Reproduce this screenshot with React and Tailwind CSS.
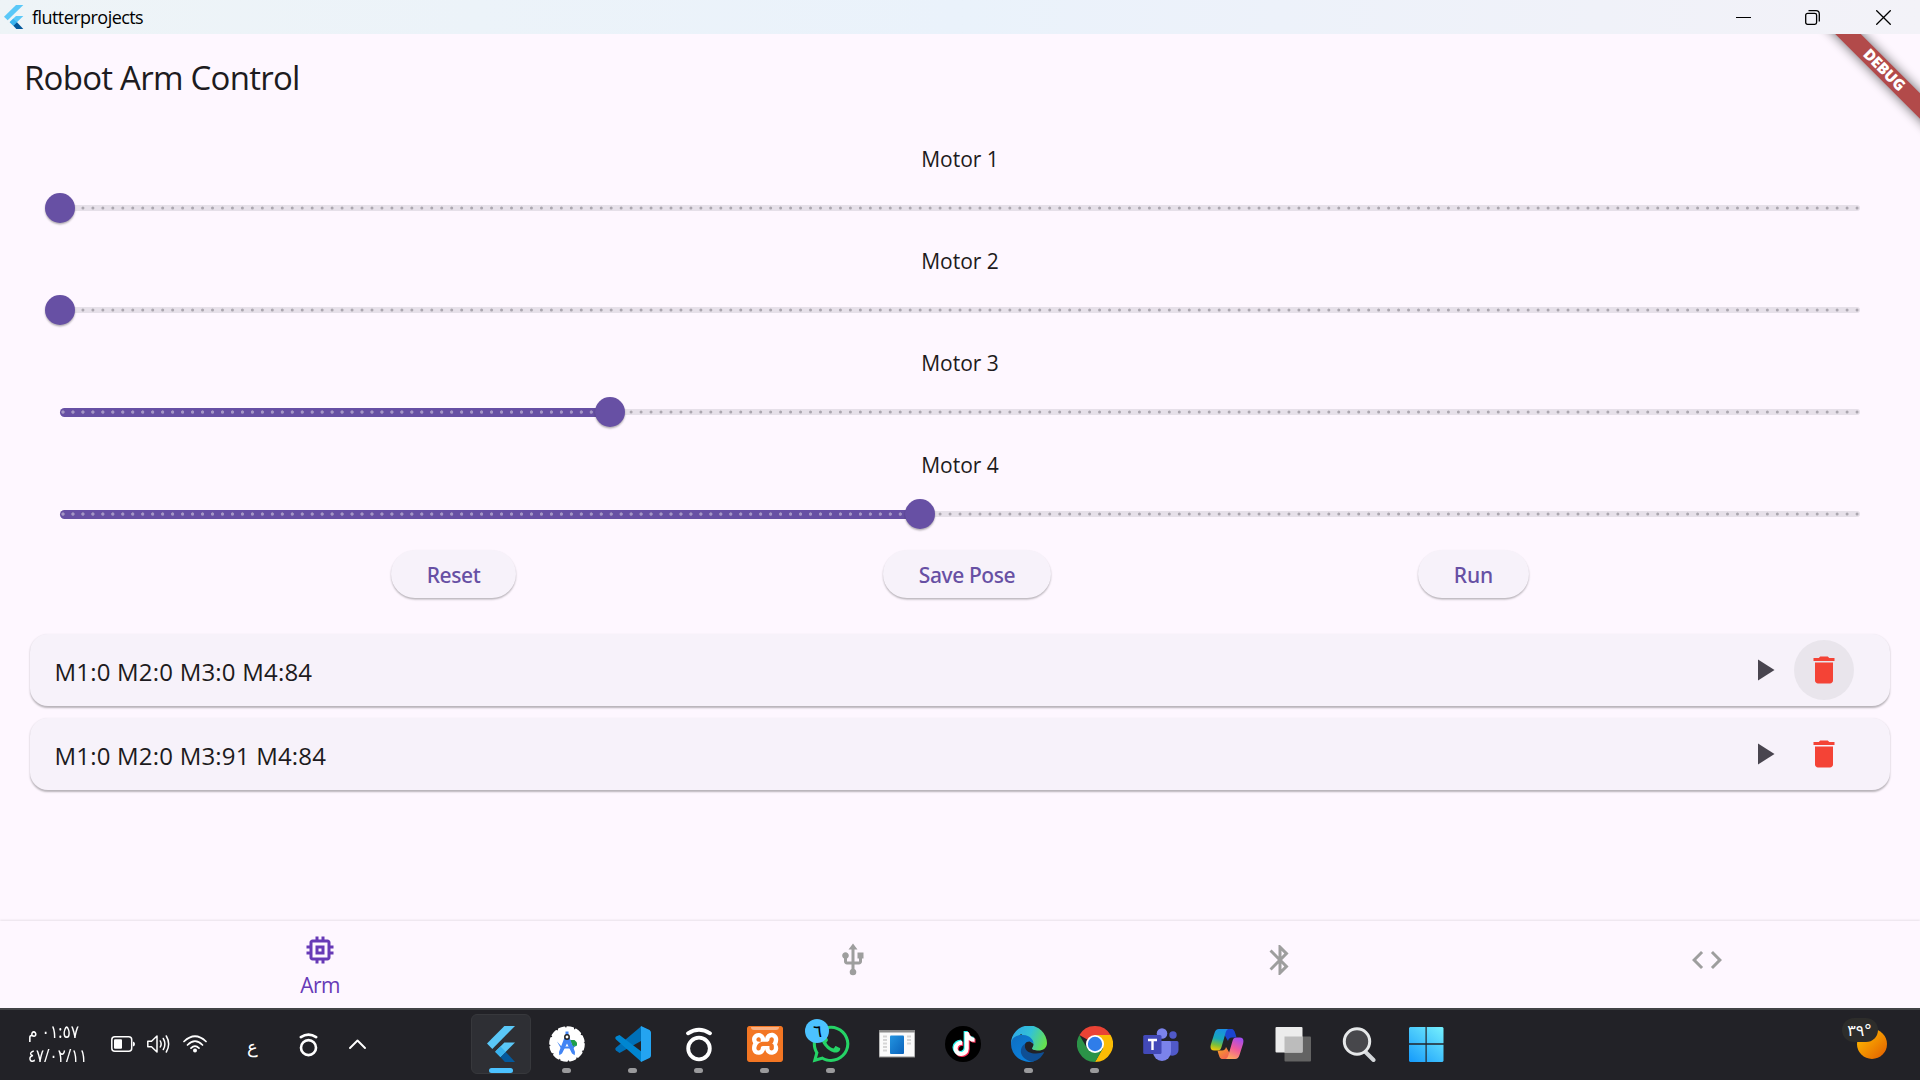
import React from "react";
import { MdMemory, MdUsb, MdBluetooth, MdCode, MdPlayArrow, MdDelete } from "react-icons/md";
import { FaWhatsapp, FaTiktok } from "react-icons/fa";
import { SiXampp } from "react-icons/si";

const motors = [
  { name: "Motor 1", value: 0 },
  { name: "Motor 2", value: 0 },
  { name: "Motor 3", value: 55 },
  { name: "Motor 4", value: 86 },
];

const poses = [
  { text: "M1:0 M2:0 M3:0 M4:84", hover: true },
  { text: "M1:0 M2:0 M3:91 M4:84", hover: false },
];

function FlutterLogo({ className }) {
  return (
    <svg viewBox="0 0 30 36" preserveAspectRatio="none" className={className}>
      <path d="M18 0H29L5.500 23L0 17.500Z" fill="#5ac8f8" />
      <path d="M18 16.500H29L14 31L8.500 25.500Z" fill="#5ac8f8" />
      <path d="M14 20.500L19.500 26L14 31.300L8.500 26Z" fill="#39b3ef" />
      <path d="M14 31.300L19.500 26L29 36H18.500Z" fill="#04599c" />
    </svg>
  );
}

function TitleBar() {
  return (
    <div className="flex h-[34px] items-center bg-linear-to-r from-[#eef4f7] via-[#eaf2fb] to-[#f3f2f8]">
      <FlutterLogo className="ml-1 h-6 w-5" />
      <span className="ml-2 text-[18px] leading-[34px] tracking-[-0.55px] text-black">flutterprojects</span>
      <div className="ml-auto flex items-center pr-[29px]">
        <svg className="mr-[54px] size-[15px]" viewBox="0 0 15 15">
          <path d="M0 7H15" stroke="#000" strokeWidth="1" transform="translate(0 .5)" />
        </svg>
        <svg className="mr-14 size-[15px]" viewBox="0 0 15 15" fill="none" stroke="#000" strokeWidth="1.300">
          <rect x="0.700" y="3.400" width="10.900" height="10.900" rx="1.800" />
          <path d="M3.500 0.700H11a3.300 3.300 0 0 1 3.300 3.300V11.500" />
        </svg>
        <svg className="size-[15px]" viewBox="0 0 15 15" fill="none" stroke="#000" strokeWidth="1.300">
          <path d="M0.300 0.300L14.700 14.700M14.700 0.300L0.300 14.700" />
        </svg>
      </div>
    </div>
  );
}

function DebugBanner() {
  return (
    <div className="pointer-events-none absolute top-0 right-0 size-[110px] overflow-hidden">
      <div className="absolute top-[27px] left-[-6px] h-[18px] w-[160px] rotate-45 bg-black/60 blur-[6px]" />
      <div className="absolute top-[27px] left-[-6px] flex h-[18px] w-[160px] rotate-45 items-center justify-center bg-[#b24a4a] text-[15.3px] leading-none font-black text-white">
        <span className="tracking-[-0.2px]">DEBUG</span>
      </div>
    </div>
  );
}

function Slider({ value }) {
  const left = `${(value / 180) * 100}%`;
  return (
    <div className="relative mx-[36px] flex h-[72px] items-center">
      <div className="h-[6px] w-full rounded-full bg-[#e6e0e9]" />
      {value > 0 && (
        <div className="absolute top-[31.500px] left-0 h-[9px] rounded-l-full bg-[#6750a4]" style={{ width: left }} />
      )}
      <svg className="absolute top-[34px] left-0 h-1 w-[1800px]" viewBox="0 0 1800 4" fill="none" strokeLinecap="round">
        <path d="M3 2H1797.100" stroke="#aba6af" strokeWidth="3" strokeDasharray="0 9.967" />
        {value > 0 && (
          <path d={`M3 2H${value * 10}`} stroke="#a495c9" strokeWidth="3" strokeDasharray="0 9.967" />
        )}
      </svg>
      <div
        className="absolute top-[21px] -ml-[15px] size-[30px] rounded-full bg-[#6750a4] shadow-[0_1.500px_2px_rgba(0,0,0,0.3)]"
        style={{ left }}
      />
    </div>
  );
}

function PillButton({ children, className }) {
  return (
    <button
      className={`h-12 rounded-full bg-[#f7f2fa] pt-[3px] font-['Noto_Sans',sans-serif] text-[21px] font-medium text-[#6750a4] shadow-[0_1.500px_2px_rgba(0,0,0,0.28)] ${className}`}
    >
      {children}
    </button>
  );
}

function PoseCard({ pose }) {
  return (
    <div className="flex h-[72px] items-center rounded-[18px] bg-[#f7f2fa] pr-9 pl-[24.500px] shadow-[0_1.500px_2px_rgba(0,0,0,0.28)]">
      <span className="pt-[3px] text-[24px] tracking-[0.2px] text-[#1d1b20]">{pose.text}</span>
      <div className="ml-auto flex">
        <div className="flex size-[60px] items-center justify-center">
          <MdPlayArrow className="size-9 text-[#49454f]" />
        </div>
        <div className={`flex size-[60px] items-center justify-center rounded-full ${pose.hover ? "bg-[#e9e5ec]" : ""}`}>
          <MdDelete className="size-9 text-[#f44336]" />
        </div>
      </div>
    </div>
  );
}

function BottomNav() {
  return (
    <div className="flex h-[87px] bg-[#fef7ff] shadow-[0_-1px_2px_rgba(0,0,0,0.09)]">
      <div className="flex w-[640px] flex-col items-center pt-[11px] text-[#673ab7]">
        <MdMemory className="size-9" />
        <span className="text-[21px] leading-[34px] tracking-[-0.6px]">Arm</span>
      </div>
      {[MdUsb, MdBluetooth, MdCode].map((Icon, i) => (
        <div key={i} className="flex flex-1 justify-center pt-[21px]">
          <Icon className="size-9 text-[#9e9e9e]" />
        </div>
      ))}
    </div>
  );
}

function AndroidStudioIcon() {
  return (
    <svg viewBox="0 0 36 36" className="size-9">
      <circle cx="18" cy="18" r="16.600" fill="#fff" />
      <circle cx="18" cy="18" r="16.600" fill="none" stroke="#fff" strokeWidth="2.400" strokeDasharray="5.500 3.190" strokeLinecap="round" />
      <path d="M21 14h4.500l2.500 2.500v3l-4 2z" fill="#1e9e4a" />
      <path d="M8 15.500l4.500 5h11.500l2.500-1.500-2 3.500H12z" fill="#4285f4" />
      <path d="M15.300 12L10 26l.3 3.200 2.700-1.700L18 17.500l5 10 2.700 1.700.3-3.200L20.700 12z" fill="#4285f4" />
      <path d="M16.500 5.500h3v5h-3z" fill="#4285f4" />
      <circle cx="18" cy="11" r="2.200" fill="#fff" stroke="#222" strokeWidth="1.500" />
    </svg>
  );
}

function VsCodeIcon() {
  return (
    <svg viewBox="0 0 36 36" className="size-9">
      <path d="M26 0.500L35 4.500V10L4.500 27L1 24.500Q-.4 23 1 21.500Z" fill="#0070b8" />
      <path d="M26 35.500L1 13.500Q-.4 12 1 10.500L4.500 9L27 26L35 31Z" fill="#0086d1" />
      <path d="M26 0Q25.500 .6 26 3V33Q25.500 35.400 26 36L34.500 32Q36 31 36 29.500V6.500Q36 5 34.500 4Z" fill="#24a4f1" />
    </svg>
  );
}

function ArcRingIcon({ className }) {
  return (
    <svg viewBox="0 0 36 36" className={className} fill="none" stroke="#fff" strokeLinecap="round">
      <circle cx="18" cy="22.500" r="10.800" strokeWidth="3.800" />
      <path d="M7 7.300Q18 .2 29 7.300" strokeWidth="3.800" />
    </svg>
  );
}

function XamppIcon() {
  return (
    <div className="relative size-9 rounded-[3px] bg-[#f37623]">
      <div className="absolute inset-[3px] bg-white" />
      <SiXampp className="absolute inset-0 size-9 text-[#f37623]" />
      <div className="absolute top-px left-1 h-[3px] w-7 rounded-b-full bg-[#f9b183]" />
    </div>
  );
}

function WhatsappIcon() {
  return (
    <div className="relative size-9">
      <FaWhatsapp className="absolute -top-[3px] -left-[3px] size-[42px] text-[#25d366]" />
      <div className="absolute -top-[7px] -left-2 flex size-6 items-center justify-center rounded-full bg-[#4cc2ff] text-[17px] leading-none text-black">
        ٦
      </div>
    </div>
  );
}

function AppWindowIcon() {
  return (
    <svg viewBox="0 0 36 36" className="size-9">
      <rect x="0" y="4" width="36" height="27.500" fill="#8b8b8b" />
      <rect x="0.600" y="6.500" width="34.800" height="24" fill="#fafafa" />
      <rect x="11" y="9.500" width="14" height="18.500" rx="1" fill="url(#appBlue)" />
      <path d="M4 10.500H8M4 14H8M4 17.500H8M4 21H8M4 24.500H8M28 10.500H32M28 14H32M28 17.500H32" stroke="#d5d5d5" strokeWidth="2" />
      <defs>
        <linearGradient id="appBlue" x1="0" y1="0" x2="1" y2="1">
          <stop stopColor="#2394e0" />
          <stop offset="1" stopColor="#0a62bb" />
        </linearGradient>
      </defs>
    </svg>
  );
}

function TiktokIcon() {
  return (
    <div className="relative size-9 rounded-full bg-black">
      <FaTiktok className="absolute top-[5px] left-[6px] size-6 text-[#25f4ee]" />
      <FaTiktok className="absolute top-[7px] left-[8px] size-6 text-[#fe2c55]" />
      <FaTiktok className="absolute top-[6px] left-[7px] size-6 text-white" />
    </div>
  );
}

function EdgeIcon() {
  return (
    <svg viewBox="0 0 36 36" className="size-9">
      <defs>
        <linearGradient id="edgeTop" x1="0" y1="0.300" x2="1" y2="0.600">
          <stop stopColor="#2ea8e8" />
          <stop offset="0.500" stopColor="#33c2d6" />
          <stop offset="1" stopColor="#66e24c" />
        </linearGradient>
        <linearGradient id="edgeLeft" x1="0" y1="0" x2="0.600" y2="1">
          <stop stopColor="#0f6fc0" />
          <stop offset="1" stopColor="#0a80dd" />
        </linearGradient>
      </defs>
      <path d="M0 18A18 18 0 0 1 36 17C36 22 32 24.500 27.500 24.500C23.500 24.500 21 23.500 21 22.500C21 21.500 22.500 21 22.500 18L10 8Z" fill="url(#edgeTop)" />
      <path d="M0 18C0 12 6 8.500 12.500 9C19 9.500 23 14 22.500 18C21 15 16 14.500 14 18C12 24 15 31 23 35.200A18 18 0 0 1 0 18Z" fill="url(#edgeLeft)" />
      <path d="M14.500 17.500C13 20 13.500 27.500 25 27.500C28.500 27.500 31 26.500 32.500 26C33.200 26 33 26.800 32.500 27.500C30 32 26 35 21 35.700C13 34 9 29 10 23.500C10.500 20.500 12.500 18.500 14.500 17.500Z" fill="#0f4f94" />
    </svg>
  );
}

function ChromeIcon() {
  return (
    <svg viewBox="0 0 36 36" className="size-9">
      <path d="M18 18L2.410 9A18 18 0 0 1 33.590 9Z" fill="#ea4335" />
      <path d="M18 9H33.590A18 18 0 0 1 18 36L25.800 22.500Z" fill="#fbbc05" />
      <path d="M10.200 22.500L2.410 9A18 18 0 0 0 18 36L25.800 22.500Z" fill="#2b9348" />
      <circle cx="18" cy="18" r="9" fill="#fff" />
      <circle cx="18" cy="18" r="7.200" fill="#2f7de9" />
    </svg>
  );
}

function TeamsIcon() {
  return (
    <svg viewBox="0 0 36 36" className="size-9">
      <circle cx="30" cy="9" r="3.700" fill="#5059c9" />
      <circle cx="19" cy="7.500" r="5.300" fill="#7b83eb" />
      <path d="M26 15H34Q35.500 15 35.500 16.500V24A6 6 0 0 1 26 28.500Z" fill="#5059c9" />
      <path d="M12 15H26.500Q28 15 28 16.500V26A9 9 0 0 1 10 26V16.500Z" fill="#7b83eb" />
      <rect x="0.200" y="9" width="18.300" height="19" rx="1.500" fill="#4249b8" />
      <path d="M5 14H14M9.500 14V24" stroke="#fff" strokeWidth="2.400" />
    </svg>
  );
}

function CopilotIcon() {
  return (
    <svg viewBox="0 0 36 36" className="size-9">
      <defs>
        <linearGradient id="cpLeft" x1="0.500" y1="0" x2="0.300" y2="1">
          <stop stopColor="#1a8fe3" />
          <stop offset="0.450" stopColor="#18a9b8" />
          <stop offset="0.750" stopColor="#7bbf3a" />
          <stop offset="1" stopColor="#f0c808" />
        </linearGradient>
        <linearGradient id="cpRight" x1="0.700" y1="0" x2="0.300" y2="1">
          <stop stopColor="#a24df0" />
          <stop offset="0.500" stopColor="#ef5a9b" />
          <stop offset="1" stopColor="#ffa95c" />
        </linearGradient>
        <linearGradient id="cpBottom" x1="0" y1="0" x2="1" y2="1">
          <stop stopColor="#f9a825" />
          <stop offset="1" stopColor="#ee4d5f" />
        </linearGradient>
      </defs>
      <path d="M12 3H22C25 3 25.500 5 26.500 8L27.500 11.500H23C20.500 11.500 19.500 13 19 15Z" fill="#1b45cf" />
      <path d="M24 33H14C11 33 10.500 31 9.500 28L8.500 24.500H13C15.500 24.500 16.500 23 17 21Z" fill="url(#cpBottom)" />
      <path d="M10 3H20C17.500 3 17 5.500 16 9L12.500 21C11.800 23.500 11 24.500 8 24.500H5C1.500 24.500 1 21.500 2 18L5.500 7C6.400 4.200 7.500 3 10 3Z" fill="url(#cpLeft)" />
      <path d="M26 33H16C18.500 33 19 30.500 20 27L23.500 15C24.200 12.500 25 11.500 28 11.500H31C34.500 11.500 35 14.500 34 18L30.500 29C29.600 31.800 28.500 33 26 33Z" fill="url(#cpRight)" />
    </svg>
  );
}

function TaskViewIcon() {
  return (
    <svg viewBox="0 0 36 36" className="size-9">
      <rect x="9.500" y="10.500" width="26.500" height="25" rx="1" fill="#636363" />
      <rect x="0.500" y="1" width="27" height="25.500" rx="1" fill="#ececec" />
      <path d="M9.500 10.500H27.500V26.500H9.500Z" fill="#bcbcbc" />
    </svg>
  );
}

function SearchIcon() {
  return (
    <svg viewBox="0 0 36 36" className="size-9" fill="none">
      <path d="M24 25.500L32.500 34" stroke="#d4d7da" strokeWidth="4" strokeLinecap="round" />
      <circle cx="16" cy="15.500" r="12.700" fill="#47474b" stroke="#e6e8e9" strokeWidth="3" />
    </svg>
  );
}

function WindowsIcon() {
  return (
    <svg viewBox="0 0 36 36" className="ml-0.5 size-9">
      <defs>
        <linearGradient id="winBlue" gradientUnits="userSpaceOnUse" x1="32" y1="1" x2="4" y2="36">
          <stop stopColor="#72edfd" />
          <stop offset="1" stopColor="#189dfb" />
        </linearGradient>
      </defs>
      <path d="M2 1H17.500V17.300H1V2ZM18.700 1H34.500L35.500 2V17.300H18.700ZM1 18.700H17.500V36H2L1 35ZM18.700 18.700H35.500V35L34.500 36H18.700Z" fill="url(#winBlue)" />
    </svg>
  );
}

const apps = [
  { icon: <FlutterLogo className="h-9 w-[29px]" />, active: true },
  { icon: <AndroidStudioIcon />, open: true },
  { icon: <VsCodeIcon />, open: true },
  { icon: <ArcRingIcon className="size-9" />, open: true },
  { icon: <XamppIcon />, open: true },
  { icon: <WhatsappIcon />, open: true },
  { icon: <AppWindowIcon /> },
  { icon: <TiktokIcon /> },
  { icon: <EdgeIcon />, open: true },
  { icon: <ChromeIcon />, open: true },
  { icon: <TeamsIcon /> },
  { icon: <CopilotIcon /> },
  { icon: <TaskViewIcon /> },
  { icon: <SearchIcon /> },
  { icon: <WindowsIcon /> },
];

function AppButton({ app }) {
  return (
    <div className="w-[66px] px-[3px]">
      <div
        className={`flex h-[60px] flex-col items-center rounded-md border-[1.500px] pt-[10.500px] ${
          app.active ? "border-[#37383c] bg-[#2e2f34]" : "border-transparent"
        }`}
      >
        {app.icon}
        {app.active && <div className="mt-1.5 h-[5px] w-6 rounded-full bg-[#4cc2ff]" />}
        {app.open && <div className="mt-1.5 mr-px h-[5px] w-[9px] rounded-full bg-[#9a9a9c]" />}
      </div>
    </div>
  );
}

function Tray() {
  return (
    <div className="flex h-[60px] w-[468px] items-center pl-[28px] font-['Noto_Sans','DejaVu_Sans',sans-serif] text-white">
      <div className="w-[83px] text-[18px] leading-6 whitespace-nowrap">
        <div className="-mt-0.5 origin-left scale-x-[0.86]">٠١:٥٧ م</div>
        <div className="origin-left scale-x-[0.83]">٤٧/٠٢/١١</div>
      </div>
      <svg className="h-4 w-6" viewBox="0 0 24 16" fill="none">
        <rect x="0.800" y="0.800" width="19.900" height="14.400" rx="3" stroke="#fff" strokeWidth="1.500" />
        <rect x="3" y="3.200" width="8" height="9.600" rx="1" fill="#fff" />
        <path d="M22 5.500Q24 6 24 8T22 10.500Z" fill="#fff" />
      </svg>
      <svg className="ml-3 h-5 w-6" viewBox="0 0 24 20" fill="none" stroke="#fff" strokeWidth="1.500" strokeLinecap="round" strokeLinejoin="round">
        <path d="M0.800 7.200V12.800H4.500L10 18V2L4.500 7.200Z" />
        <path d="M13.300 7Q15 10 13.300 13M16.300 4.500Q19.500 10 16.300 15.500M19.300 2Q24 10 19.300 18" />
      </svg>
      <svg className="ml-3 h-[18px] w-6" viewBox="0 0 24 18" fill="none" stroke="#fff" strokeWidth="1.700" strokeLinecap="round">
        <path d="M1 6.500Q12-4 23 6.500M4.500 10Q12 2.500 19.500 10M8 13.200Q12 9 16 13.200" />
        <circle cx="12" cy="15.500" r="2" fill="#fff" stroke="none" />
      </svg>
      <span className="ml-[40px] w-[10px] pt-1 text-[18px] leading-6">ع</span>
      <ArcRingIcon className="ml-[39px] size-[25px]" />
      <svg className="ml-7 h-[10px] w-[17px]" viewBox="0 0 17 10" fill="none" stroke="#fff" strokeWidth="1.900" strokeLinecap="round" strokeLinejoin="round">
        <path d="M1 9L8.500 1.500L16 9" />
      </svg>
    </div>
  );
}

function Taskbar() {
  return (
    <div className="flex h-[72px] border-t-2 border-[#434347] bg-[#222227] pt-1">
      <Tray />
      {apps.map((app, i) => (
        <AppButton key={i} app={app} />
      ))}
      <div className="relative mt-[15px] mr-[33px] ml-auto size-[30px] rounded-full bg-linear-to-br from-[#ffc400] to-[#e05a00]">
        <div
          dir="ltr"
          className="absolute -top-[11px] -left-[15px] flex h-6 w-9 items-center justify-center rounded-full bg-[#2d2d2b] pr-0.5 font-['Noto_Sans','DejaVu_Sans',sans-serif] text-[16px] leading-none tracking-[-0.5px] text-white"
        >
          ٣٩<span>°</span>
        </div>
      </div>
    </div>
  );
}

export default function App() {
  return (
    <div className="flex h-[1080px] w-[1920px] flex-col overflow-hidden bg-[#fef7ff] font-['Open_Sans','Noto_Sans',sans-serif]">
      <TitleBar />
      <div className="relative flex flex-1 flex-col">
        <h1 className="h-[84px] pl-[24px] text-[33px] leading-[88px] tracking-[-0.75px] text-[#1d1b20]">Robot Arm Control</h1>
        <DebugBanner />
        <div className="flex flex-1 flex-col p-6">
          {motors.map((m) => (
            <div key={m.name}>
              <div className="h-[30px] text-center text-[21px] leading-[34px] text-[#1d1b20]">{m.name}</div>
              <Slider value={m.value} />
            </div>
          ))}
          <div className="flex justify-evenly">
            <PillButton className="w-[125px] tracking-[-0.4px]">Reset</PillButton>
            <PillButton className="w-[168px] tracking-[-0.4px]">Save Pose</PillButton>
            <PillButton className="w-[111px] tracking-[-0.1px]">Run</PillButton>
          </div>
          <div className="mt-9 flex flex-col gap-3 px-1.5">
            {poses.map((p) => (
              <PoseCard key={p.text} pose={p} />
            ))}
          </div>
        </div>
        <BottomNav />
      </div>
      <Taskbar />
    </div>
  );
}
